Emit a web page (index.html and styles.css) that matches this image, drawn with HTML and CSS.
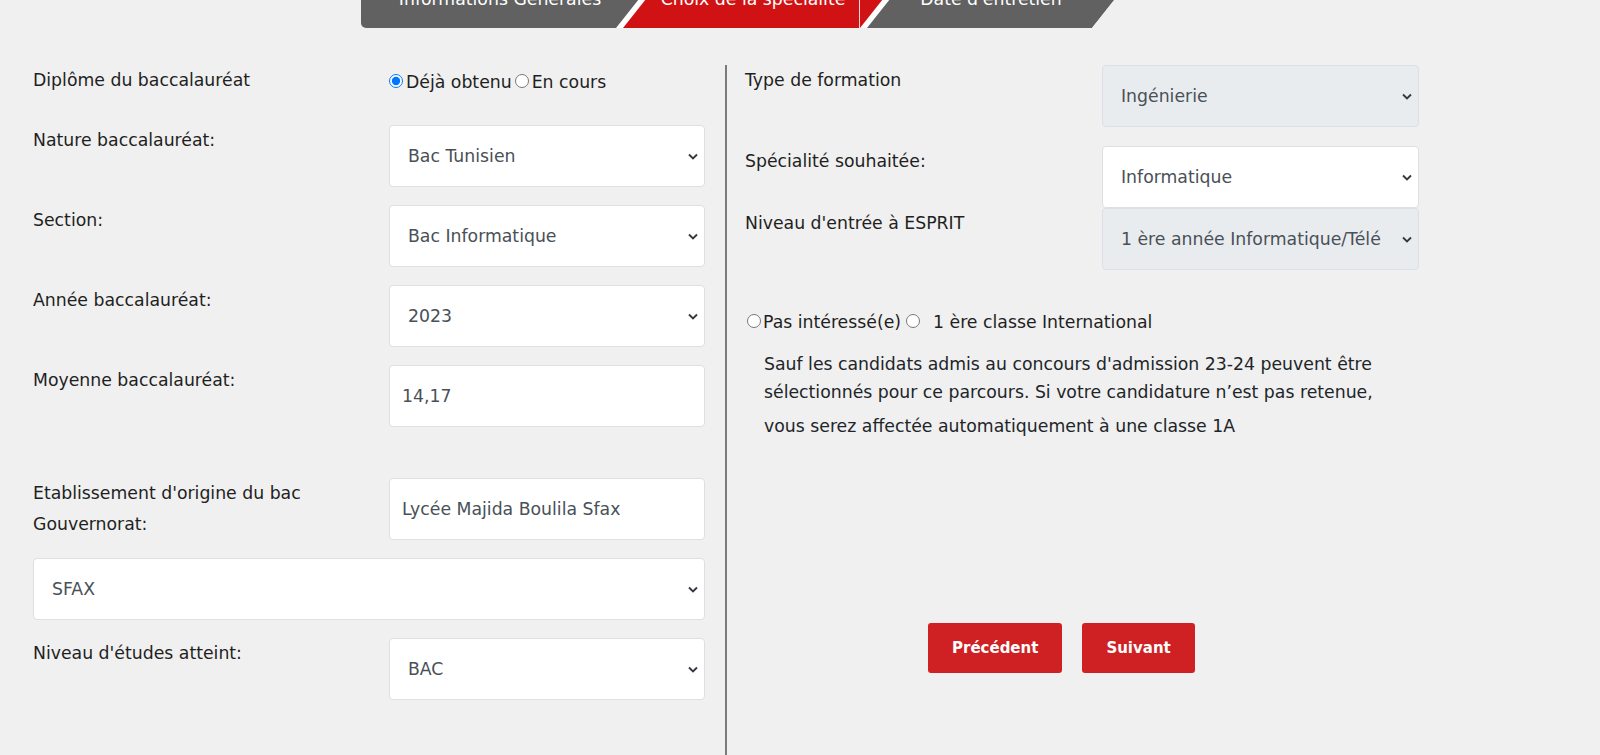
FILE: index.html
```html
<!DOCTYPE html>
<html lang="fr">
<head>
<meta charset="utf-8">
<title>Choix de la spécialité</title>
<link rel="stylesheet" href="styles.css">
</head>
<body>
<nav class="steps">
  <div class="step step-first">Informations Générales</div>
  <div class="step step-active">Choix de la spécialité</div>
  <div class="step step-last">Date d'entretien</div>
</nav>

<main class="form">
  <section class="col col-left">
    <div class="row row-top">
      <label class="lbl">Diplôme du baccalauréat</label>
      <div class="radios"><label class="radio"><input type="radio" name="diplome" class="radio-first" checked>Déjà obtenu</label><label class="radio"><input type="radio" name="diplome">En cours</label></div>
    </div>
    <div class="row">
      <label class="lbl" for="nature">Nature baccalauréat:</label>
      <select id="nature" class="field sel"><option>Bac Tunisien</option></select>
    </div>
    <div class="row">
      <label class="lbl" for="section">Section:</label>
      <select id="section" class="field sel"><option>Bac Informatique</option></select>
    </div>
    <div class="row">
      <label class="lbl" for="annee">Année baccalauréat:</label>
      <select id="annee" class="field sel"><option>2023</option></select>
    </div>
    <div class="row row-spaced">
      <label class="lbl" for="moyenne">Moyenne baccalauréat:</label>
      <input id="moyenne" class="field" type="text" value="14,17">
    </div>
    <div class="row">
      <label class="lbl lbl-two" for="etab">Etablissement d'origine du bac<br>Gouvernorat:</label>
      <input id="etab" class="field" type="text" value="Lycée Majida Boulila Sfax">
    </div>
    <div class="row">
      <select class="field sel field-wide"><option>SFAX</option></select>
    </div>
    <div class="row">
      <label class="lbl" for="niveau">Niveau d'études atteint:</label>
      <select id="niveau" class="field sel"><option>BAC</option></select>
    </div>
  </section>

  <div class="divider"></div>

  <section class="col col-right">
    <div class="row row-first">
      <label class="lbl" for="type">Type de formation</label>
      <select id="type" class="field sel sel-disabled" disabled><option>Ingénierie</option></select>
    </div>
    <div class="row row-tight">
      <label class="lbl" for="spec">Spécialité souhaitée:</label>
      <select id="spec" class="field sel"><option>Informatique</option></select>
    </div>
    <div class="row row-tight">
      <label class="lbl" for="entree">Niveau d'entrée à ESPRIT</label>
      <select id="entree" class="field sel sel-disabled" disabled><option>1 ère année Informatique/Télécommunications</option></select>
    </div>
    <div class="radios radios-right"><label class="radio"><input type="radio" name="inter" class="radio-a">Pas intéressé(e)</label><label class="radio"><input type="radio" name="inter" class="radio-b">1 ère classe International</label></div>
    <p class="note">Sauf les candidats admis au concours d'admission 23-24 peuvent être<br>sélectionnés pour ce parcours. Si votre candidature n’est pas retenue,<span class="note-last">vous serez affectée automatiquement à une classe 1A</span></p>
    <div class="actions">
      <button class="btn" type="button">Précédent</button>
      <button class="btn" type="button">Suivant</button>
    </div>
  </section>
</main>
</body>
</html>
```

FILE: styles.css
```css
html, body {
  margin: 0;
  background: #f0f0f0;
}

body {
  font-family: "DejaVu Sans", sans-serif;
  font-size: 17.3px;
  color: #1f1f1f;
}

/* ---------- step tabs ---------- */
.steps {
  display: flex;
  width: 777px;
  height: 58px;
  margin: -30px 0 0 361px;
  background: #ffffff;
  border-bottom-left-radius: 5px;
  clip-path: polygon(0 0, 100% 0, calc(100% - 46px) 100%, 0 100%);
}

.step {
  position: relative;
  flex: none;
  box-sizing: border-box;
  height: 58px;
  line-height: 58px;
  padding-right: 23px;
  text-align: center;
  white-space: nowrap;
  color: #ffffff;
  background: #616161;
}

.step-first {
  width: 301px;
  border-bottom-left-radius: 5px;
  clip-path: polygon(0 0, 100% 0, calc(100% - 46px) 100%, 0 100%);
}

.step-active {
  width: 283px;
  margin-left: -39px;
  background: #d01214;
  clip-path: polygon(46px 0, 100% 0, calc(100% - 46px) 100%, 0 100%);
}

.step-active::after {
  content: "";
  position: absolute;
  left: 236px;
  top: 30px;
  bottom: 0;
  width: 1px;
  background: rgba(255, 255, 255, 0.85);
}

.step-last {
  width: 271px;
  margin-left: -39px;
  clip-path: polygon(46px 0, 100% 0, calc(100% - 46px) 100%, 0 100%);
}

/* ---------- form layout ---------- */
.form {
  display: flex;
  align-items: stretch;
  box-sizing: border-box;
  min-height: calc(100vh - 65px);
  margin-top: 37px;
  padding-left: 33px;
}

.col-left {
  width: 672px;
  flex: none;
}

.divider {
  width: 2px;
  flex: none;
  margin: 0 18px 0 20px;
  background: #7b7b7b;
}

.col-right {
  width: 674px;
  flex: none;
}

.row {
  display: flex;
  align-items: flex-start;
  margin-bottom: 18px;
}

.row-top {
  min-height: 41px;
  margin-bottom: 19px;
}

.row-spaced {
  margin-bottom: 51px;
}

.row-first {
  margin-bottom: 19px;
}

.row-tight {
  margin-bottom: 0;
}

.lbl {
  width: 356px;
  flex: none;
  line-height: 30px;
}

.col-right .lbl {
  width: 357px;
}

.lbl-two {
  line-height: 31px;
}

/* ---------- fields ---------- */
.field {
  box-sizing: border-box;
  width: 316px;
  height: 62px;
  margin: 0;
  padding: 0 12px;
  border: 1px solid #dcdfe3;
  border-radius: 4px;
  background-color: #ffffff;
  font: inherit;
  color: #495057;
  outline: none;
}

.sel {
  -webkit-appearance: none;
  appearance: none;
  padding: 0 37px 0 18px;
  background-image: url("data:image/svg+xml,%3Csvg xmlns='http://www.w3.org/2000/svg' width='10' height='7' viewBox='0 0 10 7'%3E%3Cpath d='M1 1.5l4 4 4-4' fill='none' stroke='%23343a40' stroke-width='1.9'/%3E%3C/svg%3E");
  background-repeat: no-repeat;
  background-position: right 6px center;
}

.col-right .field {
  width: 317px;
}

.field-wide {
  width: 672px;
}

.sel-disabled,
.sel-disabled:disabled {
  background-color: #e9ecef;
  color: #495057;
  opacity: 1;
}

/* ---------- radios ---------- */
.radios {
  padding-top: 2px;
  line-height: 30px;
  white-space: nowrap;
}

.radio input {
  width: 14px;
  height: 14px;
  margin: 0 3px 2px 3px;
  vertical-align: baseline;
}

.radio input.radio-first {
  margin-left: 0;
}

.radios-right {
  margin-top: 37px;
  padding-top: 0;
}

.radios-right .radio input {
  margin: 0 2px 1px 2px;
}

.radios-right .radio input.radio-b {
  margin: 0 13px 1px 5px;
}

/* ---------- note & actions ---------- */
.note {
  margin: 13px 0 0;
  padding-left: 19px;
  line-height: 28px;
  color: #212529;
  white-space: nowrap;
}

.note-last {
  display: block;
  margin-top: 6px;
}

.actions {
  display: flex;
  gap: 20px;
  margin: 183px 0 0 183px;
}

.btn {
  height: 50px;
  padding: 0 24px;
  border: 0;
  border-radius: 3px;
  background: #cf2124;
  color: #ffffff;
  font-family: "DejaVu Sans", sans-serif;
  font-weight: bold;
  font-size: 15px;
  cursor: pointer;
}
```
